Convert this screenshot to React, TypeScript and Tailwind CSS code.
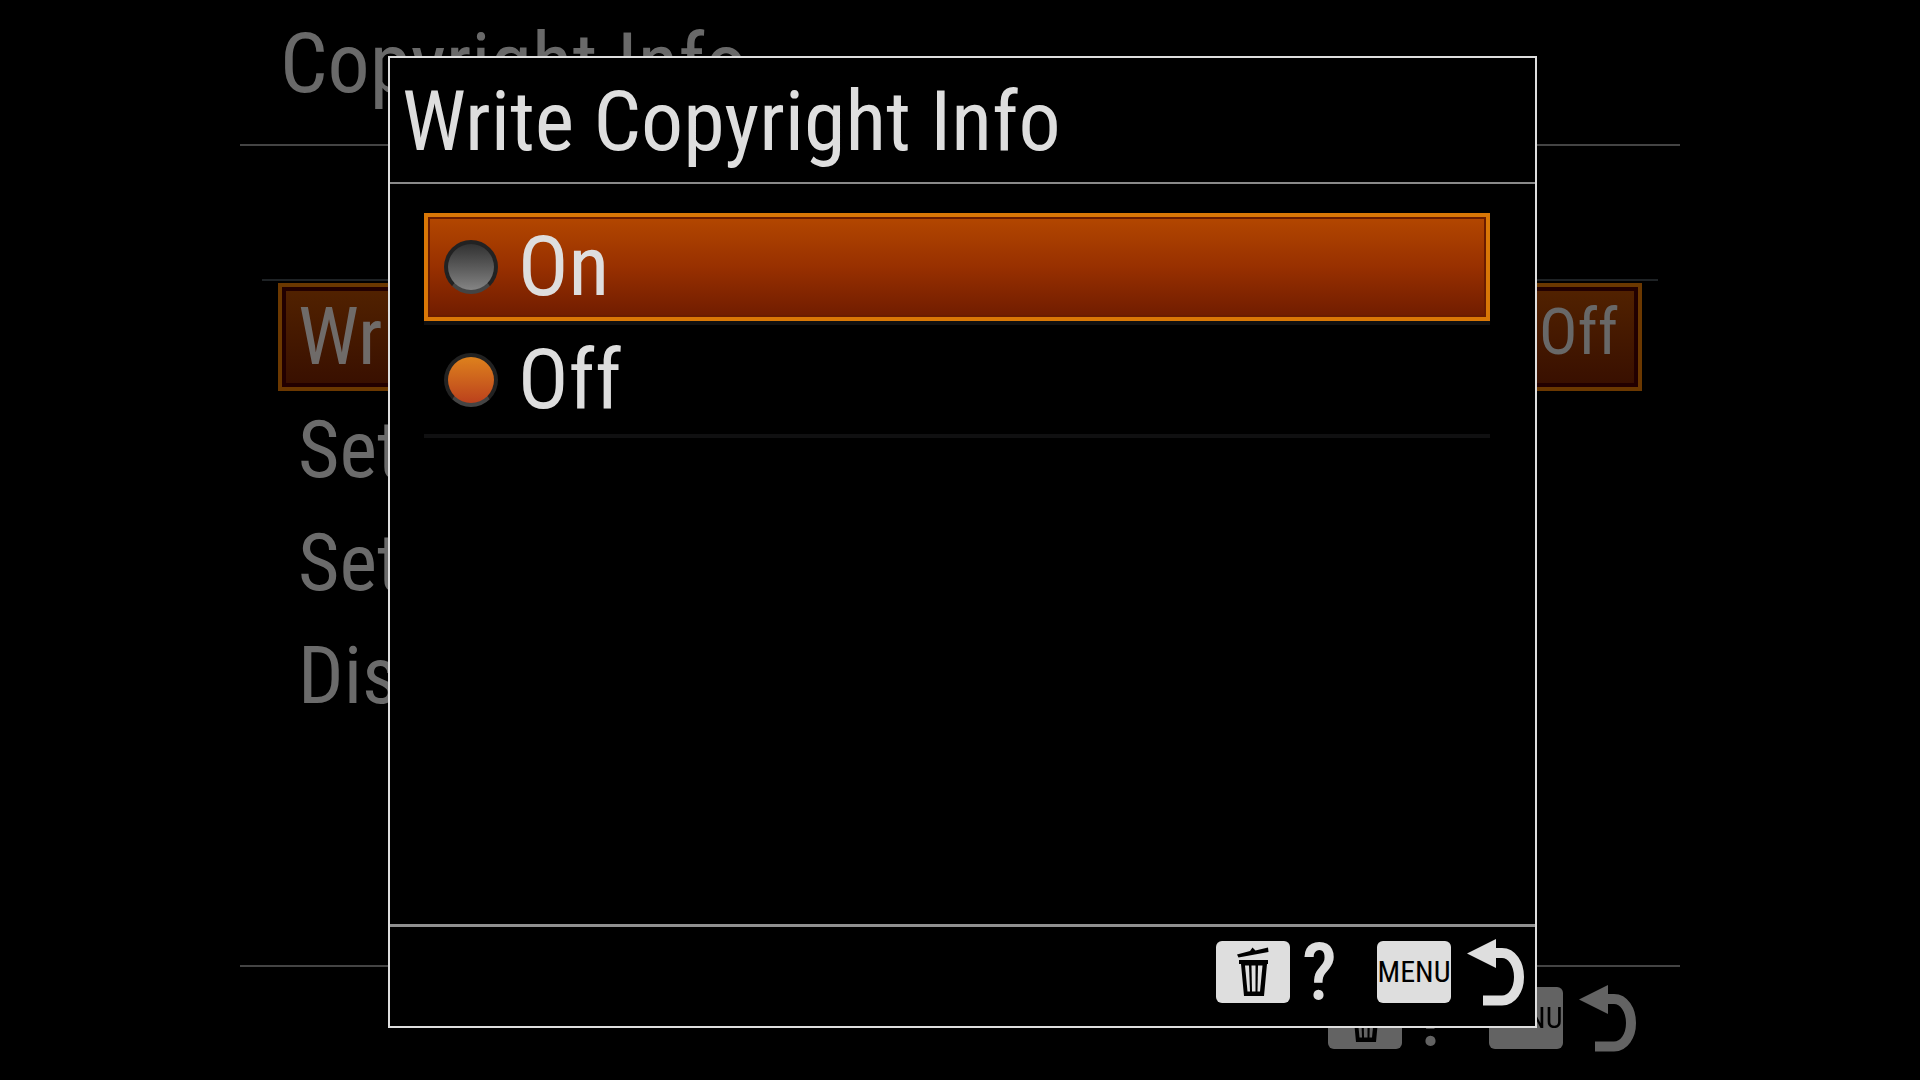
import { useState } from 'react'

const menuItems = [
  { label: 'Write Copyright Info', value: 'Off', active: true },
  { label: 'Set Photographer', value: '', active: false },
  { label: 'Set Copyright', value: '', active: false },
  { label: 'Disp. Copyright Info', value: '', active: false },
]

const options = ['On', 'Off']

function TrashIcon() {
  return (
    <svg className="w-8 h-[50px]" viewBox="0 0 32 50" aria-hidden="true">
      <path d="M0 7.500 L13 4 L15.500 0.500 L18.500 3.500 L31 0.500 L31.500 5 L1.500 10.500 Z" fill="#000" />
      <path d="M2 13 H31 V17 H30 L27 49 H7 L4 17 H2 Z" fill="#000" />
      <path d="M8 18.500 H12 L13 44.500 H10.500 Z" fill="#dedede" />
      <path d="M14.500 18.500 H18.500 V44.500 H15 Z" fill="#dedede" />
      <path d="M21 18.500 H25.500 L23 44.500 H20.500 Z" fill="#dedede" />
    </svg>
  )
}

function ReturnIcon() {
  return (
    <svg className="w-[58px] h-[68px]" viewBox="0 0 58 68" aria-hidden="true">
      <path d="M0 14.500 L29 0 V29 Z" fill="currentColor" />
      <path d="M27 14 H35 C45 14 52 25 52 38 C52 51 45 61.500 35 61.500 H16" fill="none" stroke="currentColor" strokeWidth="10" />
    </svg>
  )
}

// Key hints shared by the menu page and the dialog
function KeyHints() {
  return (
    <div className="flex justify-end items-start text-[#dedede]">
      <button type="button" aria-label="Help" className="flex items-start gap-3">
        <span className="flex items-center justify-center w-[74px] h-[62px] mt-0.5 rounded-md bg-[#dedede]">
          <TrashIcon />
        </span>
        <span className="w-8 h-16 pt-0.5 text-center text-[80px] leading-[64px] font-medium">?</span>
      </button>
      <button type="button" aria-label="Back" className="flex items-start gap-4 ml-[43px]">
        <span className="flex items-center justify-center w-[74px] h-[62px] mt-0.5 rounded-md bg-[#dedede] text-black text-[30px] leading-none">
          MENU
        </span>
        <ReturnIcon />
      </button>
    </div>
  )
}

export default function App() {
  const [selected, setSelected] = useState('Off')

  return (
    <div className="relative min-h-screen flex flex-col bg-black text-[#dedede] font-['Roboto_Condensed','Roboto',sans-serif] text-[84px] leading-[108px]">
      {/* Menu page, dimmed while the dialog is open */}
      <div className="flex-1 flex flex-col px-60 overflow-hidden" inert>
        <header className="h-[146px] pl-10 pb-4 flex items-center border-b-2 border-[#444444]">
          <h1 className="text-[#696969]">Copyright Info</h1>
        </header>

        <div className="flex-1 pt-[133px] px-[22px]">
          <ul className="flex flex-col gap-[5px] border-t-2 border-[#1e2225] px-4 pt-0.5 text-[80px]">
            {menuItems.map((item) => (
              <li key={item.label}>
                <button
                  type="button"
                  className={
                    item.active
                      ? 'w-full h-[108px] px-4 flex items-center justify-between border-4 border-[#6b3800] bg-linear-to-b from-[#522200] to-[#380f00] shadow-[inset_0_0_0_4px_#220000] text-[#6f6b69]'
                      : 'w-full h-[108px] px-5 flex items-center justify-between text-[#6b6b6b]'
                  }
                >
                  <span>{item.label}</span>
                  {item.value && <span className="pr-1 pb-2 text-[64px] leading-none text-[#686868]">{item.value}</span>}
                </button>
              </li>
            ))}
          </ul>
        </div>

        <footer className="h-[115px] border-t-2 border-[#444444] pt-[18px] pr-[43px]">
          <div className="opacity-45">
            <KeyHints />
          </div>
        </footer>
      </div>

      <div className="absolute inset-0 flex pt-14 pb-13 pl-97 pr-[383px]">
        <section
          role="dialog"
          aria-labelledby="dialog-title"
          className="flex-1 min-w-0 flex flex-col bg-black border-2 border-[#dedede]"
        >
          <header className="h-[126px] pt-1 pl-3 flex items-center border-b-2 border-[#8a8a8a]">
            <h2 id="dialog-title">Write Copyright Info</h2>
          </header>

          <fieldset className="flex-1 pt-[29px] pl-[34px] pr-[45px]">
            <legend className="sr-only">{'On / Off'}</legend>
            {options.map((option, i) => (
              <div key={option} className="border-b-4 border-[#101011] mb-px">
                <label
                  className={
                    i === 0
                      ? 'h-[108px] pl-4 flex items-center gap-5 border-4 border-[#d97706] bg-linear-to-b from-[#b34700] via-[#983000] to-[#701c00] shadow-[inset_0_0_0_2px_#6a1c00]'
                      : 'h-[108px] pl-5 flex items-center gap-5'
                  }
                >
                  <input
                    type="radio"
                    name="write-copyright"
                    value={option}
                    checked={selected === option}
                    onChange={() => setSelected(option)}
                    className="appearance-none size-[54px] rounded-full border-4 border-[#222222] border-b-[#444444] bg-origin-border bg-linear-to-b from-[#2c2c2c] to-[#8c8c8c] checked:from-[#e0861c] checked:to-[#b83a1c]"
                  />
                  <span>{option}</span>
                </label>
              </div>
            ))}
          </fieldset>

          <footer className="h-[102px] pt-3 pr-2.5 border-t-3 border-[#909090]">
            <KeyHints />
          </footer>
        </section>
      </div>
    </div>
  )
}
